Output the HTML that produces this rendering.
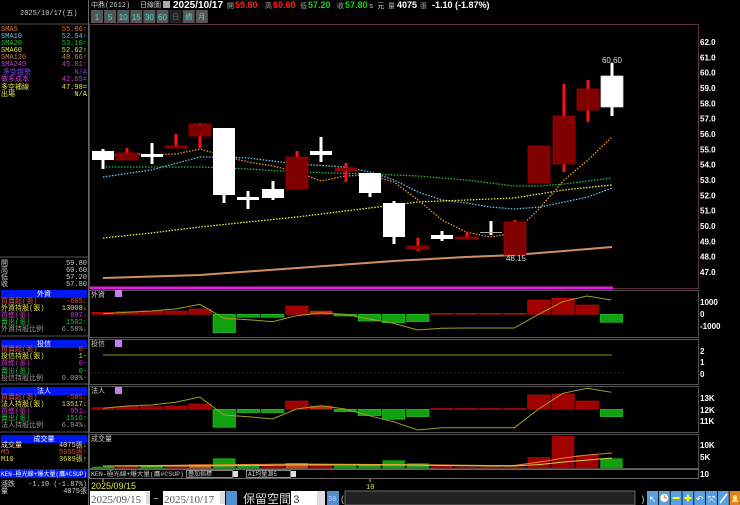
<!DOCTYPE html>
<html><head><meta charset="utf-8"><style>
html,body{margin:0;padding:0;background:#000;width:740px;height:505px;overflow:hidden}
svg{display:block;font-family:"Liberation Mono","WenQuanYi Zen Hei","Noto Sans CJK TC",monospace}
.s{font-size:7px}
.ax{font-size:8px;fill:#fff;font-family:"Liberation Sans",sans-serif;font-weight:bold}
.w{fill:#fff}
.rb{fill:#800000;stroke:#a00000;stroke-width:.8}
.rw{fill:#ff1010}
.r{fill:#a00000;stroke:#c01010;stroke-width:.6}
.g{fill:#10a010;stroke:#30c030;stroke-width:.6}
.vr{fill:#a00000}.vg{fill:#10a010}.vo{fill:#d04010}
.bt{fill:#555}.btt{fill:#40e0e0;font-size:8px;font-family:"Liberation Sans",sans-serif}
.ic{fill:#5aa0e0}
</style></head><body>
<svg width="740" height="505" viewBox="0 0 740 505" xmlns="http://www.w3.org/2000/svg">
<rect width="740" height="505" fill="#000"/>
<line x1="88.5" y1="0" x2="88.5" y2="505" stroke="#666"/>
<line x1="0" y1="24" x2="88" y2="24" stroke="#555"/>
<text x="20" y="15" class="s" fill="#ccc">2025/10/17(五)</text>
<g class="s">
<text x="1" y="31" fill="#e07830">SMA5</text><text x="87" y="31" fill="#e07830" text-anchor="end">55.86↑</text>
<text x="1" y="38" fill="#70b8e0">SMA10</text><text x="87" y="38" fill="#70b8e0" text-anchor="end">52.54↑</text>
<text x="1" y="45" fill="#20c040">SMA20</text><text x="87" y="45" fill="#20c040" text-anchor="end">53.10↑</text>
<text x="1" y="52" fill="#e0e040">SMA60</text><text x="87" y="52" fill="#e0e040" text-anchor="end">52.62↑</text>
<text x="1" y="59" fill="#c08060">SMA120</text><text x="87" y="59" fill="#c08060" text-anchor="end">48.66↑</text>
<text x="1" y="66" fill="#c040c0">SMA240</text><text x="87" y="66" fill="#c040c0" text-anchor="end">45.81↑</text>
<text x="3" y="74" fill="#8040ff">多空趨勢</text><text x="87" y="74" fill="#8040ff" text-anchor="end">N/A</text>
<text x="1" y="81" fill="#d040d0">做多成本</text><text x="87" y="81" fill="#d040d0" text-anchor="end">42.65=</text>
<text x="1" y="89" fill="#e0e040">多空補線</text><text x="87" y="89" fill="#e0e040" text-anchor="end">47.98=</text>
<text x="1" y="96" fill="#e0e040">出場</text><text x="87" y="96" fill="#e0e040" text-anchor="end">N/A</text>
<line x1="0" y1="257" x2="88" y2="257" stroke="#555"/>
<text x="1" y="265" fill="#ccc">開</text><text x="87" y="265" fill="#ccc" text-anchor="end">59.80</text>
<text x="1" y="272" fill="#ccc">高</text><text x="87" y="272" fill="#ccc" text-anchor="end">60.60</text>
<text x="1" y="279" fill="#ccc">低</text><text x="87" y="279" fill="#ccc" text-anchor="end">57.20</text>
<text x="1" y="286" fill="#ccc">收</text><text x="87" y="286" fill="#ccc" text-anchor="end">57.80</text>
<rect x="1" y="290" width="86" height="8" fill="#0018f0"/><text x="44" y="296" fill="#fff" text-anchor="middle">外資</text>
<text x="1" y="303" fill="#e05050">買賣超(張)</text><text x="87" y="303" fill="#e05050" text-anchor="end">-605↓</text>
<text x="1" y="310" fill="#e0e040">外資持股(張)</text><text x="87" y="310" fill="#e0e040" text-anchor="end">13008↓</text>
<text x="1" y="317" fill="#d030d0">買進(張)</text><text x="87" y="317" fill="#d030d0" text-anchor="end">897↓</text>
<text x="1" y="324" fill="#20c040">賣出(張)</text><text x="87" y="324" fill="#20c040" text-anchor="end">1502↑</text>
<text x="1" y="331" fill="#999">外資持股比例</text><text x="87" y="331" fill="#999" text-anchor="end">6.58%↓</text>
<line x1="0" y1="336" x2="88" y2="336" stroke="#555"/>
<rect x="1" y="340" width="86" height="8" fill="#0018f0"/><text x="44" y="346" fill="#fff" text-anchor="middle">投信</text>
<text x="1" y="351" fill="#e05050">買賣超(張)</text><text x="87" y="351" fill="#e05050" text-anchor="end">0-</text>
<text x="1" y="358" fill="#e0e040">投信持股(張)</text><text x="87" y="358" fill="#e0e040" text-anchor="end">1-</text>
<text x="1" y="365" fill="#d030d0">買進(張)</text><text x="87" y="365" fill="#d030d0" text-anchor="end">0-</text>
<text x="1" y="373" fill="#20c040">賣出(張)</text><text x="87" y="373" fill="#20c040" text-anchor="end">0-</text>
<text x="1" y="380" fill="#999">投信持股比例</text><text x="87" y="380" fill="#999" text-anchor="end">0.00%-</text>
<line x1="0" y1="384" x2="88" y2="384" stroke="#555"/>
<rect x="1" y="387" width="86" height="8" fill="#0018f0"/><text x="44" y="393" fill="#fff" text-anchor="middle">法人</text>
<text x="1" y="399" fill="#e05050">買賣超(張)</text><text x="87" y="399" fill="#e05050" text-anchor="end">-585↓</text>
<text x="1" y="406" fill="#e0e040">法人持股(張)</text><text x="87" y="406" fill="#e0e040" text-anchor="end">13517↓</text>
<text x="1" y="413" fill="#d030d0">買進(張)</text><text x="87" y="413" fill="#d030d0" text-anchor="end">951↓</text>
<text x="1" y="420" fill="#20c040">賣出(張)</text><text x="87" y="420" fill="#20c040" text-anchor="end">1516↑</text>
<text x="1" y="427" fill="#999">法人持股比例</text><text x="87" y="427" fill="#999" text-anchor="end">6.84%↓</text>
<line x1="0" y1="432" x2="88" y2="432" stroke="#555"/>
<rect x="1" y="435" width="86" height="8" fill="#0018f0"/><text x="44" y="441" fill="#fff" text-anchor="middle">成交量</text>
<text x="1" y="447" fill="#ffe0b0">成交量</text><text x="87" y="447" fill="#ffe0b0" text-anchor="end">4075張↓</text>
<text x="1" y="454" fill="#e05030">M5</text><text x="87" y="454" fill="#e05030" text-anchor="end">5955張↑</text>
<text x="1" y="461" fill="#e0e040">M10</text><text x="87" y="461" fill="#e0e040" text-anchor="end">3609張↑</text>
<rect x="0" y="469" width="88" height="9" fill="#0018f0"/><text x="1" y="476" fill="#fff" font-size="6" textLength="86" lengthAdjust="spacingAndGlyphs">KEN-極光線+爆大量(鷹#CSUP)</text>
<text x="1" y="486" fill="#ccc">漲跌</text><text x="87" y="486" fill="#ccc" text-anchor="end">-1.10 (-1.87%)</text>
<text x="1" y="493" fill="#ccc">量</text><text x="87" y="493" fill="#ccc" text-anchor="end">4075張</text>
</g>
<!-- top bar -->
<g class="s">
<text x="91" y="7" fill="#ccc">中鼎(2612)</text>
<text x="140" y="7" fill="#ccc">日線圖</text>
<rect x="163" y="1" width="7" height="7" fill="#aaa"/>
<text x="173" y="8" fill="#fff" font-size="10" font-weight="bold" font-family="Liberation Sans">2025/10/17</text>
<text x="227" y="8" fill="#aaa">開</text><text x="235" y="8" fill="#ff2020" font-size="9" font-weight="bold" font-family="Liberation Sans">59.80</text>
<text x="265" y="8" fill="#aaa">高</text><text x="273" y="8" fill="#ff2020" font-size="9" font-weight="bold" font-family="Liberation Sans">60.60</text>
<text x="300" y="8" fill="#aaa">低</text><text x="308" y="8" fill="#20d020" font-size="9" font-weight="bold" font-family="Liberation Sans">57.20</text>
<text x="337" y="8" fill="#aaa">收</text><text x="345" y="8" fill="#20d020" font-size="9" font-weight="bold" font-family="Liberation Sans">57.80</text>
<text x="369" y="8" fill="#ccc">s 元</text>
<text x="388" y="8" fill="#aaa">量</text><text x="397" y="8" fill="#fff" font-size="9" font-weight="bold" font-family="Liberation Sans">4075</text>
<text x="420" y="8" fill="#aaa">張</text><text x="432" y="8" fill="#fff" font-size="9" font-weight="bold" font-family="Liberation Sans">-1.10 (-1.87%)</text>
</g>
<!-- buttons -->
<rect class="bt" x="91" y="10" width="12" height="13"/><text class="btt" x="97" y="20" text-anchor="middle">1</text>
<rect class="bt" x="104.1" y="10" width="12" height="13"/><text class="btt" x="110.1" y="20" text-anchor="middle">5</text>
<rect class="bt" x="117.2" y="10" width="12" height="13"/><text class="btt" x="123.2" y="20" text-anchor="middle">10</text>
<rect class="bt" x="130.3" y="10" width="12" height="13"/><text class="btt" x="136.3" y="20" text-anchor="middle">15</text>
<rect class="bt" x="143.4" y="10" width="12" height="13"/><text class="btt" x="149.4" y="20" text-anchor="middle">30</text>
<rect class="bt" x="156.5" y="10" width="12" height="13"/><text class="btt" x="162.5" y="20" text-anchor="middle">60</text>
<rect x="169.6" y="10" width="12" height="13" fill="#222"/><text x="175.6" y="19" fill="#666" font-size="7" text-anchor="middle">日</text>
<rect class="bt" x="182.7" y="10" width="12" height="13"/><text x="188.7" y="19" fill="#40e0e0" font-size="7" text-anchor="middle">週</text>
<rect class="bt" x="195.8" y="10" width="12" height="13"/><text x="201.8" y="19" fill="#40e0e0" font-size="7" text-anchor="middle">月</text>
<!-- main frame -->
<rect x="89.5" y="24.5" width="609" height="264" fill="none" stroke="#603040"/>
<!-- MAs -->
<g fill="none">
<polyline points="103,177 151,170 200,157 224,157 248,158 297,164 345,167 370,172 394,180 418,192 442,200 466,203 490,207 514,209 540,207 564,202 588,197 612,188" stroke="#70c0e8" stroke-width="1.3" stroke-dasharray="1.5,1.5"/>
<polyline points="103,167 200,167 248,169 297,172 370,174 418,176 466,180 514,186 540,186 564,184 612,178" stroke="#20c040" stroke-width="1.3" stroke-dasharray="1.5,1.5"/>
<polyline points="103,238 151,233 200,227 248,222 297,217 345,211 394,205 418,202 466,200 514,198 564,190 612,185" stroke="#f0f040" stroke-width="1.3" stroke-dasharray="1.5,1.5"/>
<polyline points="103,158 127,153 151,155 176,154 200,149 224,156 248,162 273,166 297,172 321,181 345,176 369,175 394,182 418,200 442,220 466,232 490,237 514,233 538,210 564,180 588,160 612,137" stroke="#f09030" stroke-width="1.3" stroke-dasharray="1.5,1.5"/>
<polyline points="103,278 200,275 297,268 394,261 466,257 514,255 564,251 612,247" stroke="#d09060" stroke-width="2"/>
</g>
<!-- candles -->
<rect class="w" x="101.5" y="149" width="3" height="20"/><rect class="w" x="92" y="151" width="22" height="9"/>
<rect class="rw" x="125.5" y="148" width="3" height="12"/><rect class="rb" x="116" y="153" width="22" height="7"/>
<rect class="w" x="150.5" y="143" width="3" height="21"/><rect class="w" x="141" y="154" width="22" height="3"/>
<rect class="rw" x="174.5" y="134" width="3" height="14"/><rect class="rb" x="165" y="146" width="22" height="2"/>
<rect class="rw" x="198.5" y="123" width="3" height="25"/><rect class="rb" x="189" y="124" width="22" height="12"/>
<rect class="w" x="222.5" y="128" width="3" height="75"/><rect class="w" x="213" y="128" width="22" height="67"/>
<rect class="w" x="246.5" y="191" width="3" height="18"/><rect class="w" x="237" y="197" width="22" height="3"/>
<rect class="w" x="271.5" y="181" width="3" height="19"/><rect class="w" x="262" y="189" width="22" height="9"/>
<rect class="rw" x="295.5" y="151" width="3" height="38"/><rect class="rb" x="286" y="157" width="22" height="32"/>
<rect class="w" x="319.5" y="137" width="3" height="25"/><rect class="w" x="310" y="151" width="22" height="4"/>
<rect class="rw" x="344.5" y="163" width="3" height="19"/><rect class="rb" x="335" y="168" width="22" height="3"/>
<rect class="w" x="368.5" y="173" width="3" height="24"/><rect class="w" x="359" y="173" width="22" height="20"/>
<rect class="w" x="392.5" y="201" width="3" height="43"/><rect class="w" x="383" y="203" width="22" height="34"/>
<rect class="rw" x="416.5" y="238" width="3" height="13"/><rect class="rb" x="407" y="246" width="22" height="3"/>
<rect class="w" x="440.5" y="231" width="3" height="10"/><rect class="w" x="431" y="235" width="22" height="4"/>
<rect class="rw" x="465.5" y="232" width="3" height="7"/><rect class="rb" x="456" y="237" width="22" height="2"/>
<rect class="w" x="489.5" y="221" width="3" height="14"/><rect x="480" y="232" width="22" height="1" fill="#aaa"/>
<rect class="rw" x="513.5" y="220" width="3" height="35"/><rect class="rb" x="504" y="222" width="22" height="33"/>
<rect class="rb" x="528" y="146" width="22" height="37"/>
<rect class="rw" x="562.5" y="84" width="3" height="88"/><rect class="rb" x="553" y="116" width="22" height="48"/>
<rect class="rw" x="586.5" y="80" width="3" height="42"/><rect class="rb" x="577" y="89" width="22" height="21"/>
<rect class="w" x="610.5" y="63" width="3" height="53"/><rect class="w" x="601" y="76" width="22" height="31" stroke="#ddd" stroke-width=".8"/>
<line x1="90" y1="288" x2="613" y2="288" stroke="#e020e0" stroke-width="3"/>
<text x="612" y="63" fill="#ddd" font-size="8" text-anchor="middle" font-family="Liberation Sans">60.60</text>
<text x="516" y="261" fill="#ddd" font-size="8" text-anchor="middle" font-family="Liberation Sans">48.15</text>
<g class="ax">
<text x="700" y="45">62.0</text><text x="700" y="60.3">61.0</text><text x="700" y="75.7">60.0</text><text x="700" y="91">59.0</text>
<text x="700" y="106.3">58.0</text><text x="700" y="121.7">57.0</text><text x="700" y="137">56.0</text><text x="700" y="152.3">55.0</text>
<text x="700" y="167.6">54.0</text><text x="700" y="183">53.0</text><text x="700" y="198.3">52.0</text><text x="700" y="213.6">51.0</text>
<text x="700" y="229">50.0</text><text x="700" y="244.3">49.0</text><text x="700" y="259.6">48.0</text><text x="700" y="275">47.0</text>
</g>
<!-- lower panels -->
<rect x="89.5" y="290.5" width="609" height="47" fill="none" stroke="#555"/>
<rect x="89.5" y="339.5" width="609" height="45" fill="none" stroke="#555"/>
<rect x="89.5" y="386.5" width="609" height="46" fill="none" stroke="#555"/>
<rect x="89.5" y="434.5" width="609" height="34" fill="none" stroke="#555"/>
<g class="s" fill="#ccc">
<text x="91" y="297">外資</text><rect x="115" y="290" width="7" height="7" fill="#c080f0"/>
<text x="91" y="346">投信</text><rect x="115" y="340" width="7" height="7" fill="#c080f0"/>
<text x="91" y="393">法人</text><rect x="115" y="387" width="7" height="7" fill="#c080f0"/>
<text x="91" y="441">成交量</text>
</g>
<line x1="103" y1="355" x2="612" y2="355" stroke="#909010"/>
<line x1="90" y1="373" x2="625" y2="373" stroke="#222" stroke-dasharray="2,2"/>
<!-- panel1 bars -->
<rect class="r" x="92" y="312.3" width="22.5" height="2"/>
<rect class="r" x="116.2" y="311.7" width="22.5" height="2.7"/>
<rect class="r" x="140.4" y="311" width="22.5" height="3.3"/>
<rect class="r" x="164.6" y="311" width="22.5" height="3.3"/>
<rect class="r" x="188.8" y="309" width="22.5" height="5.3"/>
<rect class="g" x="213" y="314.3" width="22.5" height="18.3"/>
<rect class="g" x="237.2" y="314.3" width="22.5" height="3"/>
<rect class="g" x="261.4" y="314.3" width="22.5" height="3"/>
<rect class="r" x="285.6" y="306" width="22.5" height="8.3"/>
<rect class="r" x="309.8" y="311" width="22.5" height="3.3" style="fill:#c03010"/>
<rect class="g" x="334" y="314.3" width="22.5" height="1.7"/>
<rect class="g" x="358.2" y="314.3" width="22.5" height="6.7"/>
<rect class="g" x="382.4" y="314.3" width="22.5" height="8.3"/>
<rect class="g" x="406.6" y="314.3" width="22.5" height="7.3"/>
<rect class="r" x="430.8" y="313.3" width="22.5" height="1"/>
<rect class="r" x="455" y="313.3" width="22.5" height="1"/>
<rect class="r" x="479.2" y="313.3" width="22.5" height="1"/>
<rect class="r" x="503.4" y="313.3" width="22.5" height="1"/>
<rect class="r" x="527.6" y="300" width="22.5" height="14.3"/>
<rect class="r" x="551.8" y="298.3" width="22.5" height="16"/>
<rect class="r" x="576" y="305" width="22.5" height="9.3"/>
<rect class="g" x="600.2" y="314.3" width="22.5" height="8"/>
<polyline fill="none" stroke="#a0a020" points="103,313.7 127.2,312.3 151.4,311 175.6,309 199.8,304.3 224,318.3 248.2,319.7 272.4,321.7 296.6,315.7 320.8,313 345,314.3 369.2,319 393.4,323.3 417.6,330 441.8,328.3 466,328 490.2,328 514.4,328 538.6,314.3 562.8,301.7 587,296 611.2,300"/>
<!-- panel3 bars -->
<rect class="r" x="92" y="407.7" width="22.5" height="1.7"/>
<rect class="r" x="116.2" y="406.7" width="22.5" height="2.7"/>
<rect class="r" x="140.4" y="406.7" width="22.5" height="2.7"/>
<rect class="r" x="164.6" y="406" width="22.5" height="3.3"/>
<rect class="r" x="188.8" y="404" width="22.5" height="5.3"/>
<rect class="g" x="213" y="409.3" width="22.5" height="18"/>
<rect class="g" x="237.2" y="409.3" width="22.5" height="3.3"/>
<rect class="g" x="261.4" y="409.3" width="22.5" height="3.3"/>
<rect class="r" x="285.6" y="401" width="22.5" height="8.3"/>
<rect class="r" x="309.8" y="406" width="22.5" height="3.3" style="fill:#c03010"/>
<rect class="g" x="334" y="409.3" width="22.5" height="2.3"/>
<rect class="g" x="358.2" y="409.3" width="22.5" height="6.3"/>
<rect class="g" x="382.4" y="409.3" width="22.5" height="10"/>
<rect class="g" x="406.6" y="409.3" width="22.5" height="7.3"/>
<rect class="r" x="430.8" y="408.5" width="22.5" height="1"/>
<rect class="r" x="455" y="408.5" width="22.5" height="1"/>
<rect class="r" x="479.2" y="408.5" width="22.5" height="1"/>
<rect class="r" x="503.4" y="408.5" width="22.5" height="1"/>
<rect class="r" x="527.6" y="395" width="22.5" height="14.3"/>
<rect class="r" x="551.8" y="394" width="22.5" height="15.3"/>
<rect class="r" x="576" y="401" width="22.5" height="8.3"/>
<rect class="g" x="600.2" y="409.3" width="22.5" height="7.3"/>
<polyline fill="none" stroke="#a0a020" points="103,408.3 127.2,406 151.4,405 175.6,402.3 199.8,397 224,415 248.2,416.7 272.4,419 296.6,409 320.8,405.7 345,409 369.2,415.7 393.4,421.7 417.6,430 441.8,427.7 466,427.7 490.2,427.7 514.4,427.7 538.6,409 562.8,393.3 587,388.3 611.2,392.3"/>
<!-- volume -->
<rect class="vg" x="92" y="466.7" width="22.5" height="1.7"/>
<rect class="vr" x="116.2" y="465.3" width="22.5" height="3"/>
<rect class="vg" x="140.4" y="465.7" width="22.5" height="2.7"/>
<rect class="vr" x="164.6" y="465.7" width="22.5" height="2.7"/>
<rect class="vo" x="188.8" y="464.3" width="22.5" height="4"/>
<rect class="vg" x="213" y="458.3" width="22.5" height="10"/>
<rect class="vg" x="237.2" y="466" width="22.5" height="2.3"/>
<rect class="vr" x="261.4" y="465" width="22.5" height="3.3"/>
<rect class="vo" x="285.6" y="463" width="22.5" height="5.3"/>
<rect class="vr" x="309.8" y="464" width="22.5" height="4.3"/>
<rect class="vg" x="334" y="465.7" width="22.5" height="2.7"/>
<rect class="vg" x="358.2" y="465" width="22.5" height="3.3"/>
<rect class="vg" x="382.4" y="460.3" width="22.5" height="8"/>
<rect class="vg" x="406.6" y="463.3" width="22.5" height="5"/>
<rect class="vr" x="430.8" y="466" width="22.5" height="2.3"/>
<rect class="vr" x="455" y="466.7" width="22.5" height="1.7"/>
<rect class="vr" x="479.2" y="466.7" width="22.5" height="1.7"/>
<rect class="vr" x="503.4" y="466.7" width="22.5" height="1.7"/>
<rect class="vr" x="527.6" y="457" width="22.5" height="11.3"/>
<rect class="vr" x="551.8" y="436" width="22.5" height="32.3"/>
<rect class="vr" x="576" y="455" width="22.5" height="13.3"/>
<rect class="vg" x="600.2" y="458.3" width="22.5" height="10"/>
<polyline fill="none" stroke="#f08030" points="103,466 200,465 297,464 394,464.5 490,465.5 514,465.5 540,462 564,458 588,455 612,453"/>
<polyline fill="none" stroke="#d0d040" points="103,466 200,466 297,465 394,465 490,466 514,466 540,464.5 564,462 588,460 612,458"/>
<g class="ax">
<text x="700" y="305">1000</text><text x="700" y="317">0</text><text x="700" y="329">-1000</text>
<text x="700" y="354">2</text><text x="700" y="365">1</text><text x="700" y="377">0</text>
<text x="700" y="401">13K</text><text x="700" y="413">12K</text><text x="700" y="424">11K</text>
<text x="700" y="448">10K</text><text x="700" y="460">5K</text><text x="700" y="477">10</text>
</g>
<!-- KEN row -->
<rect x="89.5" y="469.5" width="609" height="9" fill="#000" stroke="#666"/>
<g class="s">
<text x="91" y="476" fill="#ccc" font-size="6" textLength="93" lengthAdjust="spacingAndGlyphs">KEN-極光線+爆大量(鷹#CSUP)</text>
<rect x="186.5" y="470.5" width="46" height="7" fill="#000" stroke="#888"/><text x="188" y="476" fill="#ccc" font-size="6">疊加指標</text>
<rect x="233" y="471" width="5" height="6" fill="#ddd"/>
<rect x="246.5" y="470.5" width="44" height="7" fill="#000" stroke="#888"/><text x="248" y="476" fill="#ccc" font-size="6">AI均量潮5</text>
<rect x="291" y="471" width="5" height="6" fill="#ddd"/>
<line x1="103" y1="479" x2="103" y2="482" stroke="#cc0"/>
<line x1="370" y1="479" x2="370" y2="482" stroke="#cc0"/>
<text x="91" y="489" fill="#e0e040" font-size="9" font-family="Liberation Sans">2025/09/15</text>
<text x="366" y="489" fill="#e0e040">10</text>
</g>
<!-- bottom controls -->
<rect x="90" y="491" width="60" height="14" fill="#fff"/><text x="91" y="503" font-size="11" fill="#555" font-family="Liberation Serif">2025/09/15</text>
<rect x="146" y="492" width="4" height="12" fill="#ddd"/>
<text x="153" y="502" fill="#ddd" font-size="10">~</text>
<rect x="163" y="491" width="62" height="14" fill="#fff"/><text x="164" y="503" font-size="11" fill="#555" font-family="Liberation Serif">2025/10/17</text>
<rect x="220" y="492" width="5" height="12" fill="#ddd"/>
<rect x="226" y="491" width="11" height="14" fill="#5090d0"/>
<text x="243" y="503" fill="#ddd" font-size="12" font-family="Noto Sans CJK TC,sans-serif">保留空間</text>
<rect x="291" y="491" width="34" height="14" fill="#fff"/><text x="293" y="503" font-size="11" fill="#333">3</text>
<rect x="317" y="491" width="8" height="14" fill="#ddd"/>
<rect x="327" y="491" width="12" height="14" fill="#5090d0"/><text x="328" y="501" fill="#ccf" font-size="7">30</text>
<text x="340" y="502" fill="#ccc" font-size="9">(</text>
<rect x="345" y="491" width="290" height="14" fill="#222" stroke="#666"/>
<text x="640" y="502" fill="#ccc" font-size="9">)</text>
<g font-family="DejaVu Sans" font-size="9" text-anchor="middle" fill="#fff">
<rect class="ic" x="647" y="491" width="11" height="14"/><text x="652.5" y="502">↖</text>
<rect class="ic" x="658.8" y="491" width="11" height="14"/><circle cx="664.3" cy="498" r="4" fill="#fff"/><path d="M664.3 498V495M664.3 498H667" stroke="#e08020"/>
<rect class="ic" x="670.6" y="491" width="11" height="14"/><rect x="672.6" y="497" width="7" height="2" fill="#ff0"/>
<rect class="ic" x="682.4" y="491" width="11" height="14"/><rect x="684.4" y="497" width="7" height="2" fill="#ff0"/><rect x="686.9" y="494.5" width="2" height="7" fill="#ff0"/>
<rect class="ic" x="694.2" y="491" width="11" height="14"/><text x="699.7" y="502">↶</text>
<rect class="ic" x="706" y="491" width="11" height="14"/><text x="711.5" y="502">⤧</text>
<rect class="ic" x="717.8" y="491" width="11" height="14"/><path d="M720 503L727 494" stroke="#fff" stroke-width="1.5"/>
<rect x="729.6" y="491" width="11" height="14" fill="#e08020"/><path d="M731.5 502h7l-1.5-2v-3a2 2 0 0 0-4 0v3z" fill="#ffe080"/>
</g>
</svg>
</body></html>
